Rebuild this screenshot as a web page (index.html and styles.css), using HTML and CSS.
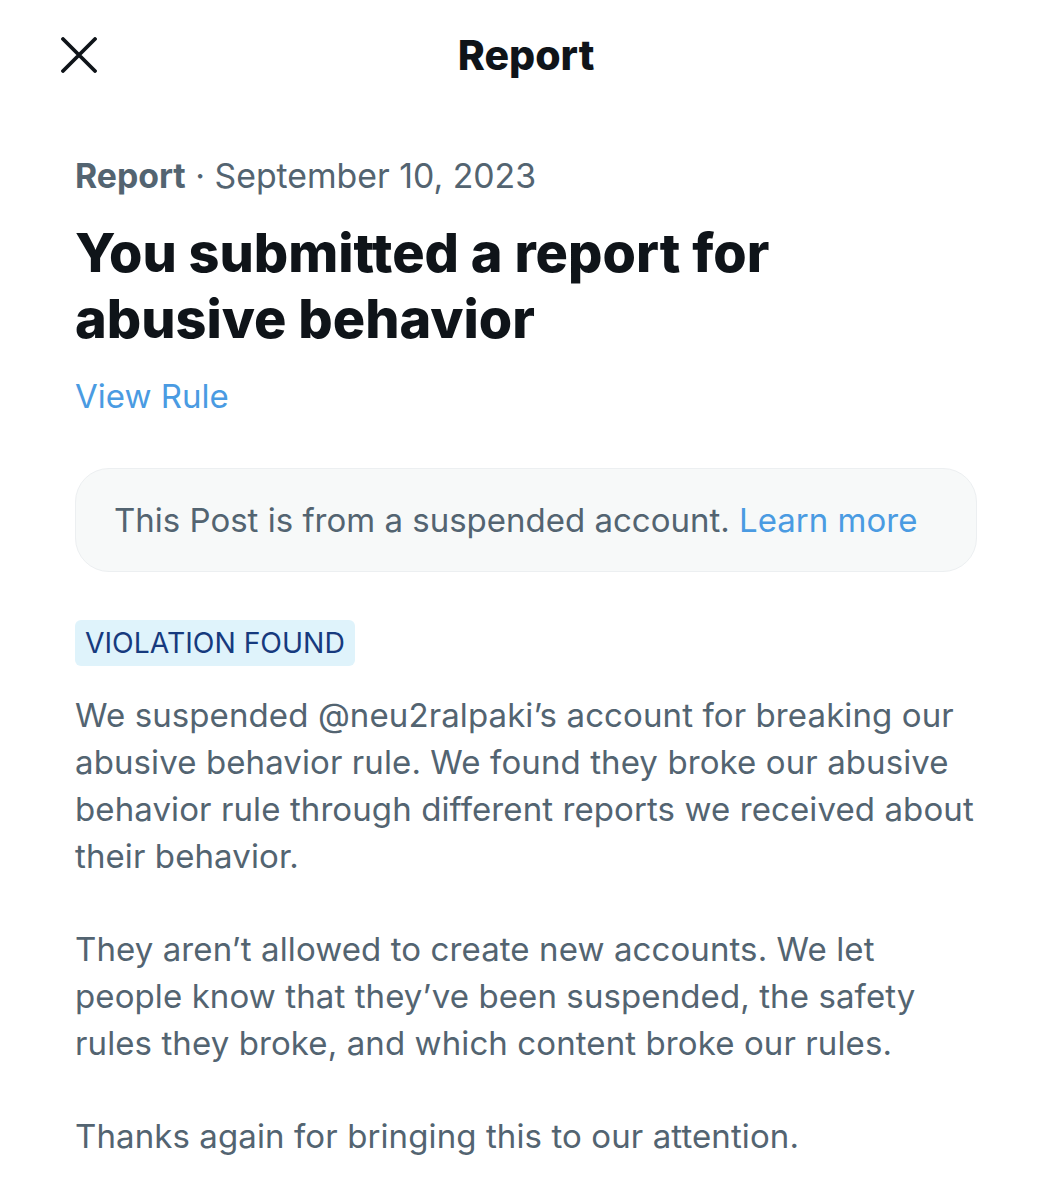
FILE: index.html
```html
<!DOCTYPE html>
<html lang="en">
<head>
<meta charset="utf-8">
<title>Report</title>
<link rel="stylesheet" href="styles.css">
</head>
<body>
<header class="topbar">
  <button class="close" aria-label="Close">
    <svg viewBox="0 0 36 36" width="36" height="36"><path d="M2 2 L34 34 M34 2 L2 34" stroke="#0f1419" stroke-width="3.8" fill="none" stroke-linecap="round"/></svg>
  </button>
  <h1 class="topbar-title">Report</h1>
</header>
<main class="content">
  <p class="meta"><span class="meta-strong">Report</span> · September 10, 2023</p>
  <h2 class="headline">You submitted a report for abusive behavior</h2>
  <a class="link view-rule" href="#">View Rule</a>
  <div class="notice"><span>This Post is from a suspended account. <a class="link" href="#">Learn more</a></span></div>
  <span class="badge">VIOLATION FOUND</span>
  <p class="body-text">We suspended @neu2ralpaki’s account for breaking our abusive behavior rule. We found they broke our abusive behavior rule through different reports we received about their behavior.</p>
  <p class="body-text">They aren’t allowed to create new accounts. We let people know that they’ve been suspended, the safety rules they broke, and which content broke our rules.</p>
  <p class="body-text">Thanks again for bringing this to our attention.</p>
</main>
</body>
</html>
```
FILE: styles.css
```css
* { box-sizing: border-box; }
html, body { margin: 0; padding: 0; background: #fff; }
body { font-family: Inter, "Open Sans", sans-serif; color: #536471; }

.topbar {
  height: 110px;
  display: flex;
  align-items: center;
  justify-content: center;
  position: relative;
}
.close {
  position: absolute;
  left: 61px;
  top: 37px;
  width: 36px;
  height: 36px;
  padding: 0;
  border: 0;
  background: none;
  display: flex;
}
.topbar-title {
  margin: 0;
  font-weight: 800;
  font-size: 41px;
  color: #0f1419;
}

.content {
  padding: 44px 75px 0 75px;
  display: flex;
  flex-direction: column;
  align-items: flex-start;
}
.meta {
  margin: 0;
  font-size: 33.8px;
  line-height: 44px;
  color: #536471;
}
.meta-strong {
  font-weight: 700;
}
.headline {
  margin: 22px 0 0 0;
  font-weight: 800;
  font-size: 54px;
  line-height: 66px;
  color: #0f1419;
  max-width: 800px;
}
.link {
  color: #4a9be2;
  text-decoration: none;
}
.view-rule {
  margin-top: 22px;
  font-size: 33px;
  line-height: 44px;
}
.notice {
  margin-top: 50px;
  align-self: stretch;
  height: 104px;
  display: flex;
  align-items: center;
  padding: 0 38px;
  background: #f7f9f9;
  border: 1.5px solid #eceff1;
  border-radius: 34px;
  font-size: 33px;
  white-space: nowrap;
}
.badge {
  margin-top: 48px;
  padding: 0 10px;
  height: 46px;
  display: inline-flex;
  align-items: center;
  background: #dff3fb;
  color: #163a7e;
  border-radius: 6px;
  font-size: 28.3px;
}
.body-text {
  margin: 26px 0 0 0;
  font-size: 33px;
  line-height: 47px;
  letter-spacing: 0.1px;
  color: #536471;
}
.body-text + .body-text { margin-top: 46px; }
```
